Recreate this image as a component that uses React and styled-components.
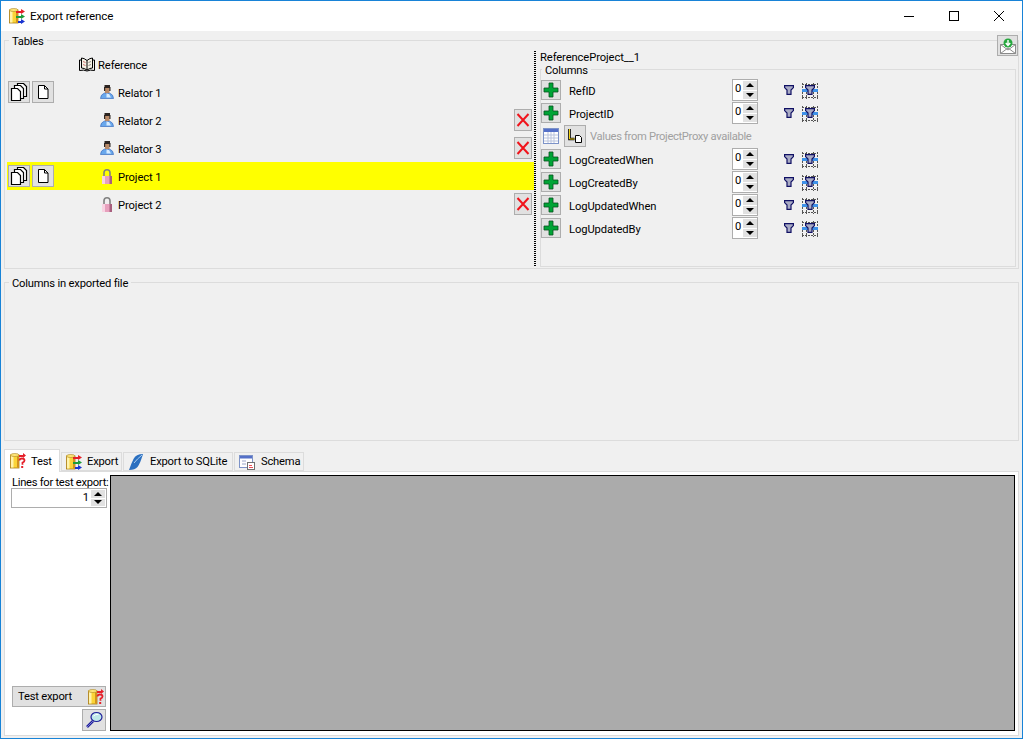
import React from "react";
import styled, { createGlobalStyle } from "styled-components";

const GlobalStyle = createGlobalStyle`
  html, body {
    margin: 0;
    padding: 0;
    background: #fff;
  }
  * {
    box-sizing: border-box;
  }
`;

const Window = styled.div`
  width: 1023px;
  height: 739px;
  border: 1px solid #1883d7;
  background: #f0f0f0;
  display: flex;
  flex-direction: column;
  overflow: hidden;
  font-family: "Roboto", "Noto Sans", sans-serif;
  font-size: 11.2px;
  letter-spacing: -0.1px;
  line-height: 14px;
  color: #000;
  white-space: nowrap;
`;

const TitleBar = styled.div`
  height: 30px;
  flex: none;
  background: #fff;
  display: flex;
  align-items: center;
  padding-left: 8px;
  padding-right: 1px;
`;

const TitleText = styled.span`
  margin-left: 5px;
  font-size: 11.6px;
  flex: 1;
`;

const CaptionButton = styled.div`
  width: 45px;
  height: 30px;
  display: flex;
  align-items: center;
  justify-content: center;
`;

const Content = styled.div`
  flex: 1;
  display: flex;
  flex-direction: column;
  padding: 9px 3px 2px 3px;
`;

const Group = styled.div`
  position: relative;
  flex: none;
  height: ${(p) => p.$height}px;
  border: 1px solid #dcdcdc;
  margin-top: ${(p) => p.$top || 0}px;
`;

const Legend = styled.span`
  position: absolute;
  left: ${(p) => p.$left}px;
  top: -6px;
  padding: 0 3px;
  background: #f0f0f0;
  letter-spacing: -0.2px;
`;

const TablesBody = styled.div`
  height: 100%;
  display: flex;
`;

const TreePanel = styled.div`
  width: 529px;
  flex: none;
  padding: 9px 0 0 2px;
`;

const TreeRow = styled.div`
  height: 28px;
  display: flex;
  align-items: center;
  padding: 0 2px 0 1px;
  background: ${(p) => (p.$active ? "#ffff00" : "transparent")};
`;

const RowActions = styled.div`
  width: 71px;
  flex: none;
  display: flex;
  gap: 2px;
`;

const TreeLabel = styled.div`
  display: flex;
  align-items: center;
  gap: ${(p) => (p.$depth ? 2 : 3)}px;
  margin-left: ${(p) => (p.$depth ? 21 : 0)}px;
  margin-top: 2px;
`;

const TreeText = styled.span`
  padding-top: 2px;
`;

const ToolButton = styled.div`
  width: ${(p) => p.$w || 22}px;
  height: ${(p) => p.$h || 22}px;
  flex: none;
  background: #e1e1e1;
  border: 1px solid #adadad;
  display: flex;
  align-items: center;
  justify-content: center;
`;

const RemoveButton = styled(ToolButton)`
  margin-left: auto;
`;

const MailButton = styled(ToolButton)`
  position: absolute;
  right: 0;
  top: -6px;
`;

const Splitter = styled.div`
  width: 2px;
  flex: none;
  margin: 10px 0 2px;
  background-image: repeating-linear-gradient(to bottom, #000 0 1px, #f0f0f0 1px 2px);
`;

const DetailPanel = styled.div`
  flex: 1;
  display: flex;
  flex-direction: column;
  padding: 9px 2px 1px 4px;
`;

const DetailTitle = styled.div`
  height: 14px;
  margin-bottom: 5px;
  padding-top: 1px;
  flex: none;
`;

const ColumnsList = styled.div`
  padding-top: 9px;
`;

const ColumnRow = styled.div`
  height: 23px;
  display: flex;
  align-items: flex-start;
`;

const PlusButton = styled(ToolButton)`
  margin-top: 1px;
`;

const ColumnName = styled.span`
  width: 163px;
  margin-left: 8px;
  margin-top: 6px;
  flex: none;
`;

const FilterSlot = styled.span`
  display: flex;
  margin-left: ${(p) => p.$gap}px;
  margin-top: ${(p) => p.$top}px;
`;

const ProxyTable = styled.span`
  display: flex;
  margin: 3px 5px 0 2px;
`;

const ProxyHint = styled.span`
  margin: 5px 0 0 4px;
  color: #a0a0a0;
  letter-spacing: -0.33px;
`;

const SpinBox = styled.div`
  width: ${(p) => p.$w}px;
  height: ${(p) => p.$h}px;
  flex: none;
  margin-left: ${(p) => p.$left || 0}px;
  border: 1px solid #adadad;
  background: #fff;
  display: flex;
  align-items: flex-start;
`;

const SpinValue = styled.span`
  flex: 1;
  padding: 2px 2px 0;
  text-align: ${(p) => (p.$right ? "right" : "left")};
`;

const SpinArrows = styled.div`
  width: 15px;
  height: 100%;
  flex: none;
  display: flex;
  flex-direction: column;
  gap: 1px;
  padding: 1px 1px 1px 0;
`;

const SpinArrow = styled.div`
  flex: 1;
  background: #e1e1e1;
  display: flex;
  align-items: center;
  justify-content: center;
  &::after {
    content: "";
    border-left: 4px solid transparent;
    border-right: 4px solid transparent;
    border-${(p) => (p.$down ? "top" : "bottom")}: 4px solid #000;
  }
`;

const TabStrip = styled.div`
  height: 22px;
  flex: none;
  margin-top: 8px;
  display: flex;
  align-items: flex-end;
  position: relative;
  z-index: 1;
  letter-spacing: -0.2px;
`;

const Tab = styled.div`
  width: ${(p) => p.$w}px;
  height: ${(p) => (p.$active ? 23 : 19)}px;
  margin-left: ${(p) => (p.$active ? 0 : 1)}px;
  margin-bottom: ${(p) => (p.$active ? -1 : 0)}px;
  padding-left: ${(p) => (p.$active ? 5 : 4)}px;
  background: ${(p) => (p.$active ? "#fff" : "#f0f0f0")};
  border: 1px solid #dcdcdc;
  border-bottom: ${(p) => (p.$active ? "none" : "1px solid #dcdcdc")};
  display: flex;
  align-items: center;
  gap: ${(p) => p.$gap}px;
`;

const TabText = styled.span`
  padding-top: 1px;
`;

const TabPage = styled.div`
  flex: none;
  height: 265px;
  background: #fff;
  border: 1px solid #dcdcdc;
  display: flex;
  padding: 3px 3px 4px 0;
`;

const SideBar = styled.div`
  width: 105px;
  flex: none;
  display: flex;
  flex-direction: column;
  padding-left: 6px;
`;

const SideLabel = styled.div`
  height: 13px;
  padding-top: 1px;
  line-height: 14px;
  margin-left: 1px;
  letter-spacing: -0.28px;
`;

const TestButton = styled.div`
  margin-top: auto;
  margin-left: 1px;
  width: 94px;
  height: 21px;
  background: #e1e1e1;
  border: 1px solid #adadad;
  display: flex;
  align-items: center;
  justify-content: space-between;
  padding: 0 1px 0 5px;
  letter-spacing: -0.2px;
`;

const LensButton = styled(ToolButton)`
  margin: 2px 0 0 71px;
`;

const Output = styled.div`
  flex: 1;
  background: #ababab;
  border: 1px solid #000;
`;

const Icon = ({ w = 16, h = 16, children }) => (
  <svg width={w} height={h} viewBox={`0 0 ${w} ${h}`} fill="none" style={{ flex: "none", display: "block" }}>
    {children}
  </svg>
);

const Cylinder = () => (
  <>
    <rect x=".5" y="2" width="8.500" height="13" fill="#fbd437" stroke="#a87a16" strokeWidth=".8" />
    <rect x="1" y="2.500" width="2.500" height="12" fill="#fff3ae" />
    <rect x="7" y="2.500" width="2" height="12" fill="#d1921c" />
    <ellipse cx="4.750" cy="2" rx="4.250" ry="1.500" fill="#ffe77a" stroke="#a8801c" strokeWidth=".6" />
  </>
);

const TransferIcon = () => (
  <Icon>
    <Cylinder />
    <path d="M7 3h5V1l4 2.500-4 2.500V5H7z" fill="#e5202a" />
    <path d="M7 8h5V6l4 2.500-4 2.500v-1H7z" fill="#1d9c3a" />
    <path d="M9 13h3v-2l4 2.500-4 2.500v-1H9z" fill="#1a34d0" />
  </Icon>
);

const TestIcon = () => (
  <Icon>
    <Cylinder />
    <path d="M9 2h4V0l3 2.500-3 2.500V4H9z" fill="#e5202a" />
    <path d="M9.500 7.500q0-2 2.500-2t2.500 2q0 1.400-2 2.200v2" stroke="#e5202a" strokeWidth="1.800" />
    <rect x="11.200" y="13" width="2" height="2" fill="#e5202a" />
  </Icon>
);

const PagesIcon = () => (
  <Icon w={18} h={18}>
    <path d="M7.500 .5h6l3 3v10h-9z" fill="#fff" stroke="#000" strokeWidth="1.200" />
    <path d="M4.500 2.500h6l3 3v10h-9z" fill="#fff" stroke="#000" strokeWidth="1.200" />
    <path d="M1.500 5.500h6l3 3v9h-9z" fill="#fff" stroke="#000" strokeWidth="1.200" />
  </Icon>
);

const PageIcon = () => (
  <Icon>
    <path d="M3.500 1.500h6l3.500 3.500v9.500h-9.500z" fill="#fff" stroke="#000" />
    <path d="M9.500 1.500v3.500h3.500" stroke="#000" />
  </Icon>
);

const BookIcon = () => (
  <Icon>
    <path d="M8 3.500Q5 1 2.500 1v10Q5 11 8 13q3-2 5.500-2V1Q11 1 8 3.500z" fill="#f4f1e6" stroke="#000" />
    <path d="M2 3H.5v10.500Q5 12.500 8 14q3-1.500 7.500-.5V3H14M8 3.500V13" stroke="#000" />
    <path d="M4 4.500l2.500 1M4 7.500l2.500 1" stroke="#c85050" strokeWidth=".8" />
    <path d="M9.500 5.500l2.500-1M9.500 8.500l2.500-1" stroke="#707070" strokeWidth=".8" />
  </Icon>
);

const PersonIcon = () => (
  <Icon>
    <path d="M.5 13.500q0-4 4-5.500l2.500 1 2.500-1q4 1.500 4 5.500z" fill="#6aa8ec" stroke="#3c6fc0" strokeWidth=".7" />
    <path d="M6.500 9h2.500l2 3.500H6.500z" fill="#d8ecff" />
    <rect x="4.500" y="0" width="5.500" height="3" fill="#2c2420" />
    <rect x="5" y="3" width="4.500" height="5" fill="#b98a68" />
    <rect x="4" y="2" width="1.200" height="4" fill="#2c2420" />
    <rect x="9.300" y="2" width="1.200" height="4" fill="#2c2420" />
  </Icon>
);

const LockIcon = () => (
  <Icon>
    <path d="M4 7V3.800a3 3 0 0 1 6 0V7" stroke="#808080" strokeWidth="1.600" />
    <rect x="2" y="7" width="10" height="8" fill="#e7a0bd" />
    <rect x="2" y="7" width="3" height="8" fill="#f8d3e2" />
    <rect x="9.500" y="7" width="2.500" height="8" fill="#a85f7e" />
  </Icon>
);

const CrossIcon = () => (
  <Icon>
    <path d="M2.500 2l11 12M13.500 2l-11 12" stroke="#f0141c" strokeWidth="2" />
  </Icon>
);

const PlusIcon = () => (
  <Icon>
    <path d="M6 1h4v5h5v4h-5v5H6v-5H1V6h5z" fill="#00a436" stroke="#07501f" strokeWidth=".8" />
  </Icon>
);

const FunnelIcon = () => (
  <Icon w={10} h={10}>
    <path d="M.6.6h8.800v2L7 5v4.400H3V5L.6 2.600z" fill="#a9abc4" stroke="#101064" strokeWidth="1.200" />
  </Icon>
);

const GridFunnelIcon = () => (
  <Icon w={16} h={16}>
    <path d="M.5 0v16M4.500 0v16M11.500 0v16M15.500 0v16M0 1.500h16M0 14.500h16" stroke="#555" strokeDasharray="2 1" />
    <path d="M0 7.500h16" stroke="#3f92e8" strokeWidth="3" />
    <path d="M3.600 2.600h8.800v2L10 7v4.400H6V7L3.600 4.600z" fill="#a9abc4" stroke="#101064" strokeWidth="1.200" />
  </Icon>
);

const TableIcon = () => (
  <Icon>
    <rect x=".5" y=".5" width="15" height="15" fill="#fff" stroke="#7d93c8" />
    <rect x="1" y="1" width="14" height="3" fill="#5570c8" />
    <path d="M1 7h14M1 10h14M1 13h14M5 4v11M8 4v11M11 4v11" stroke="#b9c3dc" />
  </Icon>
);

const CornerIcon = () => (
  <Icon>
    <path d="M2.500 1v10h5" stroke="#000" strokeWidth="2.600" />
    <path d="M2.500 1v10h5" stroke="#f2d21a" strokeWidth="1" />
    <path d="M8.500 7.500h4l2 2v5h-6z" fill="#fff" stroke="#000" />
  </Icon>
);

const MailIcon = () => (
  <Icon>
    <path d="M.5 6.500h15v9H.5z" fill="#fff" stroke="#8a8a8a" />
    <path d="M.5 15.500L8 10l7.500 5.500M.5 6.500L8 12l7.500-5.500" stroke="#8a8a8a" />
    <circle cx="8" cy="5" r="4.500" fill="#27a83f" />
    <path d="M8 2v5M5.800 5L8 7.500 10.200 5" stroke="#fff" strokeWidth="1.400" />
  </Icon>
);

const FeatherIcon = () => (
  <Icon>
    <path d="M15 0q-7 0-9.500 5T1 16q6 0 8.500-3T15 0z" fill="#2a6fc0" />
    <path d="M14 1Q9 5 6 9" stroke="#a9cdf0" />
  </Icon>
);

const SchemaIcon = () => (
  <Icon>
    <rect x=".5" y="1.500" width="13" height="12" fill="#fff" stroke="#7d93c8" />
    <rect x="1" y="2" width="12" height="2.500" fill="#5570c8" />
    <path d="M3 7h4M3 10h4" stroke="#9aa6c8" />
    <rect x="8.500" y="8.500" width="7" height="7" fill="#fff" stroke="#707070" />
    <path d="M10 11l1 1 1-1 1 1M10 13.500h4" stroke="#e5202a" strokeWidth=".8" />
  </Icon>
);

const LensIcon = () => (
  <Icon w={18} h={18}>
    <path d="M8 10l-6 6" stroke="#20209a" strokeWidth="2.600" />
    <path d="M8 10l-6 6" stroke="#8c8ce0" strokeWidth=".8" />
    <ellipse cx="11.500" cy="6" rx="5.500" ry="4.500" fill="#bfe9ea" stroke="#20209a" strokeWidth="1.200" />
    <path d="M8.500 5q2-2 5-1.500" stroke="#fff" />
  </Icon>
);

const MinimizeGlyph = () => (
  <Icon w={10} h={10}>
    <path d="M0 5.500h10" stroke="#000" />
  </Icon>
);

const MaximizeGlyph = () => (
  <Icon w={10} h={10}>
    <rect x=".5" y=".5" width="9" height="9" stroke="#000" />
  </Icon>
);

const CloseGlyph = () => (
  <Icon w={10} h={10}>
    <path d="M0 0l10 10M10 0L0 10" stroke="#000" />
  </Icon>
);

const Spinner = ({ value, width, height, left, right }) => (
  <SpinBox $w={width} $h={height} $left={left}>
    <SpinValue $right={right}>{value}</SpinValue>
    <SpinArrows>
      <SpinArrow />
      <SpinArrow $down />
    </SpinArrows>
  </SpinBox>
);

const treeRows = [
  { label: "Reference", icon: <BookIcon /> },
  { label: "Relator 1", icon: <PersonIcon />, depth: 1, copy: true },
  { label: "Relator 2", icon: <PersonIcon />, depth: 1, remove: true },
  { label: "Relator 3", icon: <PersonIcon />, depth: 1, remove: true },
  { label: "Project 1", icon: <LockIcon />, depth: 1, copy: true, active: true },
  { label: "Project 2", icon: <LockIcon />, depth: 1, remove: true },
];

const ColumnLine = ({ name }) => (
  <ColumnRow>
    <PlusButton $w={20} $h={20}>
      <PlusIcon />
    </PlusButton>
    <ColumnName>{name}</ColumnName>
    <Spinner value="0" width={26} height={22} />
    <FilterSlot $gap={26} $top={6}>
      <FunnelIcon />
    </FilterSlot>
    <FilterSlot $gap={8} $top={4}>
      <GridFunnelIcon />
    </FilterSlot>
  </ColumnRow>
);

export default function App() {
  return (
    <>
      <GlobalStyle />
      <Window>
        <TitleBar>
          <TransferIcon />
          <TitleText>Export reference</TitleText>
          <CaptionButton>
            <MinimizeGlyph />
          </CaptionButton>
          <CaptionButton>
            <MaximizeGlyph />
          </CaptionButton>
          <CaptionButton>
            <CloseGlyph />
          </CaptionButton>
        </TitleBar>
        <Content>
          <Group $height={229}>
            <Legend $left={4}>Tables</Legend>
            <MailButton $w={21} $h={21}>
              <MailIcon />
            </MailButton>
            <TablesBody>
              <TreePanel>
                {treeRows.map((row) => (
                  <TreeRow key={row.label} $active={row.active}>
                    <RowActions>
                      {row.copy && (
                        <>
                          <ToolButton>
                            <PagesIcon />
                          </ToolButton>
                          <ToolButton>
                            <PageIcon />
                          </ToolButton>
                        </>
                      )}
                    </RowActions>
                    <TreeLabel $depth={row.depth}>
                      {row.icon}
                      <TreeText>{row.label}</TreeText>
                    </TreeLabel>
                    {row.remove && (
                      <RemoveButton $w={18}>
                        <CrossIcon />
                      </RemoveButton>
                    )}
                  </TreeRow>
                ))}
              </TreePanel>
              <Splitter />
              <DetailPanel>
                <DetailTitle>ReferenceProject__1</DetailTitle>
                <Group $height={198}>
                  <Legend $left={1}>Columns</Legend>
                  <ColumnsList>
                    <ColumnLine name="RefID" />
                    <ColumnLine name="ProjectID" />
                    <ColumnRow>
                      <ProxyTable>
                        <TableIcon />
                      </ProxyTable>
                      <ToolButton>
                        <CornerIcon />
                      </ToolButton>
                      <ProxyHint>Values from ProjectProxy available</ProxyHint>
                    </ColumnRow>
                    <ColumnLine name="LogCreatedWhen" />
                    <ColumnLine name="LogCreatedBy" />
                    <ColumnLine name="LogUpdatedWhen" />
                    <ColumnLine name="LogUpdatedBy" />
                  </ColumnsList>
                </Group>
              </DetailPanel>
            </TablesBody>
          </Group>
          <Group $height={159} $top={13}>
            <Legend $left={4}>Columns in exported file</Legend>
          </Group>
          <TabStrip>
            <Tab $active $w={56} $gap={5}>
              <TestIcon />
              <TabText>Test</TabText>
            </Tab>
            <Tab $w={61} $gap={5}>
              <TransferIcon />
              <TabText>Export</TabText>
            </Tab>
            <Tab $w={110} $gap={6}>
              <FeatherIcon />
              <TabText>Export to SQLite</TabText>
            </Tab>
            <Tab $w={70} $gap={6}>
              <SchemaIcon />
              <TabText>Schema</TabText>
            </Tab>
          </TabStrip>
          <TabPage>
            <SideBar>
              <SideLabel>Lines for test export:</SideLabel>
              <Spinner value="1" width={96} height={20} right />
              <TestButton>
                <span>Test export</span>
                <TestIcon />
              </TestButton>
              <LensButton $w={24}>
                <LensIcon />
              </LensButton>
            </SideBar>
            <Output />
          </TabPage>
        </Content>
      </Window>
    </>
  );
}
